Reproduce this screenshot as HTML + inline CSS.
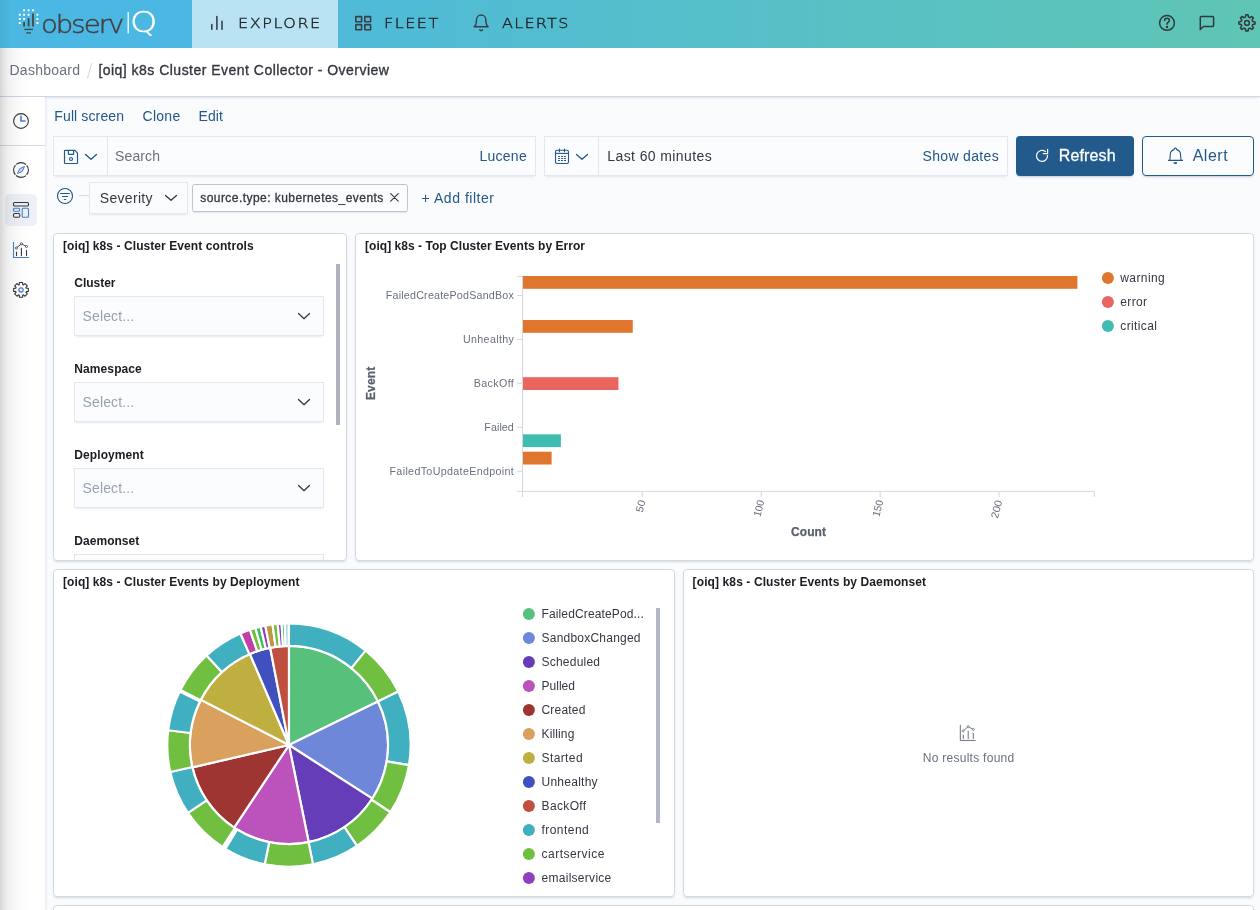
<!DOCTYPE html>
<html lang="en">
<head>
<meta charset="utf-8">
<title>[oiq] k8s Cluster Event Collector - Overview</title>
<style>
*{box-sizing:border-box;margin:0;padding:0}
html,body{width:1260px;height:910px;overflow:hidden;background:#fafbfd;font-family:"Liberation Sans",sans-serif;color:#343741;font-size:14px}
#root{position:absolute;left:0;top:0;width:1260px;height:910px;overflow:hidden;will-change:transform}
.a{position:absolute}
.t{position:absolute;white-space:nowrap;line-height:1}
#hdr{left:0;top:0;width:1260px;height:48px;background:linear-gradient(90deg,#49b7e5 0%,#5fc5b4 100%)}
#logo{left:0;top:0;width:192px;height:48px;background:#4ab8e3}
#tabx{left:192px;top:0;width:146px;height:48px;background:#b9e3f3}
#crumb{left:0;top:48px;width:1260px;height:49px;background:#fff;border-bottom:1px solid #d3dae6;box-shadow:0 2px 2px -1px rgba(152,162,179,.3)}
#side{left:0;top:97px;width:45px;height:813px;background:#fff;box-shadow:1px 0 2px rgba(120,135,165,.17)}
.panel{position:absolute;background:#fff;border:1px solid #d3dae6;border-radius:4px;box-shadow:0 2px 2px -1px rgba(152,162,179,.3),0 1px 5px -2px rgba(152,162,179,.3);overflow:hidden}
.fbox{position:absolute;background:#fbfcfd;border:1px solid #e3e8f0;box-shadow:0 1px 1px -1px rgba(152,162,179,.2),0 3px 2px -2px rgba(152,162,179,.2)}
.sel{position:absolute;left:74px;width:250px;height:39.5px;background:#fbfcfd;border:1px solid #e3e8f0;box-shadow:0 1px 1px -1px rgba(152,162,179,.2),0 3px 2px -2px rgba(152,162,179,.2)}
svg{position:absolute;overflow:visible}
#edge{left:0;top:48px;width:32px;height:862px;background:linear-gradient(90deg,rgba(0,0,0,.16) 0,rgba(0,0,0,.09) 5px,rgba(0,0,0,.047) 10px,rgba(0,0,0,.016) 20px,rgba(0,0,0,0) 30px);pointer-events:none}
#edge2{left:0;top:0;width:12px;height:48px;background:linear-gradient(90deg,rgba(0,0,0,.05) 0,rgba(0,0,0,0) 11px)}
</style>
</head>
<body><div id="root">
<div class="a" id="hdr"></div><div class="a" id="logo"></div><div class="a" id="tabx"></div>
<svg style="left:0;top:0" width="192" height="48" viewBox="0 0 192 48"><rect x="23.1" y="9.3" width="2" height="2" rx="0.4" fill="#fff"/><rect x="27.6" y="9.3" width="2" height="2" rx="0.4" fill="#fff"/><rect x="32.0" y="9.3" width="2" height="2" rx="0.4" fill="#fff"/><rect x="18.8" y="13.7" width="2" height="2" rx="0.4" fill="#fff"/><rect x="23.1" y="13.7" width="2" height="2" rx="0.4" fill="#fff"/><rect x="27.6" y="13.7" width="2" height="2" rx="0.4" fill="#fff"/><rect x="36.4" y="13.7" width="2" height="2" rx="0.4" fill="#fff"/><rect x="18.8" y="17.9" width="2" height="2" rx="0.4" fill="#fff"/><rect x="23.1" y="17.9" width="2" height="2" rx="0.4" fill="#fff"/><rect x="36.4" y="17.9" width="2" height="2" rx="0.4" fill="#fff"/><rect x="18.8" y="21.9" width="2" height="2" rx="0.4" fill="#fff"/><rect x="36.4" y="21.9" width="2" height="2" rx="0.4" fill="#fff"/><g stroke="#4a4545" stroke-width="1.8" fill="none"><path d="M24.1 22.1V26.5M28.6 18.3V26.5M33 13.5V26.5"/><path d="M24.3 29.4H33.1" stroke-width="1.3"/><path d="M26.2 32.9H31" stroke-width="1.3"/></g><path d="M128.2 11.9V33.6" stroke="#fff" stroke-width="1.3"/></svg>
<svg style="left:0;top:0" width="600" height="48" viewBox="0 0 600 48"><g fill="none" stroke="#3a3f47" stroke-width="1.6" stroke-linecap="round" stroke-linejoin="round"><path d="M211.8 24.5V29.3M216.9 16.6V29.3M222 21.3V29.3"/><rect x="355.8" y="16.6" width="5.8" height="5.2" rx="0.3"/><rect x="364.8" y="16.6" width="5.8" height="5.2" rx="0.3"/><rect x="355.8" y="24.6" width="5.8" height="5.2" rx="0.3"/><rect x="364.8" y="24.6" width="5.8" height="5.2" rx="0.3"/><g transform="translate(471.8,13.5) scale(0.78)" stroke-width="1.85"><path d="M18 8A6 6 0 0 0 6 8c0 7-3 9-3 9h18s-3-2-3-9"/><path d="M13.73 21a2 2 0 0 1-3.46 0"/></g></g></svg>
<svg style="left:1150px;top:0" width="110" height="48" viewBox="1150 0 110 48"><g fill="none" stroke="#33383c" stroke-width="1.5" stroke-linecap="round" stroke-linejoin="round"><circle cx="1167" cy="22.9" r="7.4"/><path d="M1164.6 20.6C1164.6 19.2 1165.6 18.3 1167 18.3C1168.4 18.3 1169.4 19.2 1169.4 20.4C1169.4 22.2 1167 22.2 1167 24.2"/><circle cx="1167" cy="27" r="0.5" fill="#33383c"/><path d="M1200.3 29.6V17.4C1200.3 16.8 1200.7 16.4 1201.3 16.4H1212.6C1213.2 16.4 1213.6 16.8 1213.6 17.4V25.4C1213.6 26 1213.2 26.4 1212.6 26.4H1203.4Z"/><path d="M1245.40 17.15 L1245.88 14.82 L1248.02 14.82 L1248.50 17.15 L1249.95 17.75 L1251.94 16.44 L1253.46 17.96 L1252.15 19.95 L1252.75 21.40 L1255.08 21.88 L1255.08 24.02 L1252.75 24.50 L1252.15 25.95 L1253.46 27.94 L1251.94 29.46 L1249.95 28.15 L1248.50 28.75 L1248.02 31.08 L1245.88 31.08 L1245.40 28.75 L1243.95 28.15 L1241.96 29.46 L1240.44 27.94 L1241.75 25.95 L1241.15 24.50 L1238.82 24.02 L1238.82 21.88 L1241.15 21.40 L1241.75 19.95 L1240.44 17.96 L1241.96 16.44 L1243.95 17.75Z" fill="none" stroke="#33383c" stroke-width="1.5" stroke-linejoin="round"/><circle cx="1246.95" cy="22.95" r="2.4"/></g></svg>
<div class="a" id="crumb"></div>
<svg style="left:84px;top:60px" width="12" height="22" viewBox="84 60 12 22"><path d="M87.4 78.7L91.7 63.1" stroke="#d3dae6" stroke-width="1.1"/></svg>
<div class="a" id="side"></div>
<div class="a" style="left:0;top:145px;width:45px;height:1px;background:#d3dae6"></div>
<div class="a" style="left:5px;top:194px;width:32px;height:32px;border-radius:5px;background:#edf0f6"></div>
<svg style="left:0;top:97px" width="46" height="220" viewBox="0 97 46 220"><circle cx="21" cy="121" r="7.4" fill="none" stroke="#343741" stroke-width="1.1"/><path d="M21 115.6V121H25.6" fill="none" stroke="#4a7fcc" stroke-width="1.6"/><circle cx="21" cy="170" r="7.4" fill="none" stroke="#343741" stroke-width="1.1" stroke-dasharray="10.6 1" stroke-dashoffset="5.3"/><path d="M24.5 166.5L22.3 171.3L17.5 173.5L19.7 168.7Z" fill="#c7d8f0" stroke="#4a7fcc" stroke-width="1" stroke-linejoin="round"/><rect x="13.5" y="202.5" width="15" height="3.5" rx="1.1" fill="none" stroke="#343741" stroke-width="1.1"/><rect x="13.5" y="213.5" width="6.3" height="3.7" rx="1.1" fill="none" stroke="#343741" stroke-width="1.1"/><rect x="13.5" y="208.3" width="6.1" height="3" rx="1" fill="none" stroke="#4a7fcc" stroke-width="1.1"/><rect x="22.2" y="208.3" width="6.3" height="8.9" rx="1" fill="none" stroke="#4a7fcc" stroke-width="1.1"/><path d="M13.5 242.0V257.5H28.9" fill="none" stroke="#4a7fcc" stroke-width="1.1" stroke-linejoin="round"/><path d="M16.5 252.0V255.6M21.4 248.3V255.6M26.5 250.5V255.6" stroke="#343741" stroke-width="1.1" stroke-linecap="round"/><path d="M16.4 248.0L21.4 243.8L26.5 246.5" fill="none" stroke="#343741" stroke-width="0.9"/><circle cx="16.4" cy="248.0" r="1.05" fill="#fff" stroke="#343741" stroke-width="0.8"/><circle cx="21.4" cy="243.8" r="1.05" fill="#fff" stroke="#343741" stroke-width="0.8"/><circle cx="26.5" cy="246.5" r="1.05" fill="#fff" stroke="#343741" stroke-width="0.8"/><path d="M19.28 284.68 L19.33 282.59 L22.67 282.59 L22.72 284.68 L23.48 284.99 L24.99 283.55 L27.35 285.91 L25.91 287.42 L26.22 288.18 L28.31 288.23 L28.31 291.57 L26.22 291.62 L25.91 292.38 L27.35 293.89 L24.99 296.25 L23.48 294.81 L22.72 295.12 L22.67 297.21 L19.33 297.21 L19.28 295.12 L18.52 294.81 L17.01 296.25 L14.65 293.89 L16.09 292.38 L15.78 291.62 L13.69 291.57 L13.69 288.23 L15.78 288.18 L16.09 287.42 L14.65 285.91 L17.01 283.55 L18.52 284.99Z" fill="none" stroke="#2b2f3a" stroke-width="1.05" stroke-linejoin="round"/><circle cx="21" cy="289.9" r="2.1" fill="none" stroke="#4a7fcc" stroke-width="1.3"/></svg>
<div class="fbox" style="left:53px;top:136px;width:483px;height:40px"></div>
<div class="a" style="left:107px;top:137px;width:1px;height:38px;background:#e3e8f0"></div>
<div class="fbox" style="left:544px;top:136px;width:464px;height:40px"></div>
<div class="a" style="left:598px;top:137px;width:1px;height:38px;background:#e3e8f0"></div>
<svg style="left:60px;top:145px" width="24" height="24" viewBox="60 145 24 24"><g fill="none" stroke="#22588a" stroke-width="1.2" stroke-linejoin="round"><path d="M65.3 150.3H74.9L77.5 153.1V162.7Q77.5 163.5 76.7 163.5H65.3Q64.5 163.5 64.5 162.7V151.1Q64.5 150.3 65.3 150.3Z"/><path d="M68.4 150.3V153.8Q68.4 154.4 69 154.4H73Q73.6 154.4 73.6 153.8V150.3"/><circle cx="71" cy="159" r="1.5"/></g></svg>
<svg style="left:85.30px;top:154.00px" width="12" height="6" viewBox="0 0 12 6"><path d="M0.5 0.5 L6.0 5.3 L11.5 0.5" fill="none" stroke="#22588a" stroke-width="1.3" stroke-linecap="round" stroke-linejoin="round"/></svg>
<svg style="left:552px;top:145px" width="24" height="24" viewBox="552 145 24 24"><g fill="none" stroke="#22588a" stroke-width="1.1" stroke-linejoin="round"><rect x="555.5" y="150.3" width="13" height="13.2" rx="1.6"/><path d="M555.5 153.4H568.5"/><path d="M559.4 149.1V151.7M564.5 149.1V151.7" stroke-linecap="round"/></g><g fill="#22588a"><rect x="558.0" y="155.90" width="2" height="1" rx="0.3"/><rect x="558.0" y="157.95" width="2" height="1" rx="0.3"/><rect x="558.0" y="160.00" width="2" height="1" rx="0.3"/><rect x="561.0" y="155.90" width="2" height="1" rx="0.3"/><rect x="561.0" y="157.95" width="2" height="1" rx="0.3"/><rect x="561.0" y="160.00" width="2" height="1" rx="0.3"/><rect x="564.0" y="155.90" width="2" height="1" rx="0.3"/><rect x="564.0" y="157.95" width="2" height="1" rx="0.3"/><rect x="564.0" y="160.00" width="2" height="1" rx="0.3"/></g></svg>
<svg style="left:576.20px;top:153.50px" width="12" height="6" viewBox="0 0 12 6"><path d="M0.5 0.5 L6.0 5.3 L11.5 0.5" fill="none" stroke="#22588a" stroke-width="1.3" stroke-linecap="round" stroke-linejoin="round"/></svg>
<div class="a" style="left:1016px;top:136px;width:118px;height:40px;background:#225a8b;border-radius:4px;box-shadow:0 2px 2px -1px rgba(54,97,126,.3)"></div>
<svg style="left:1034px;top:146px" width="18" height="20" viewBox="1034 146 18 20"><path d="M1045.5 151.6A5.5 5.5 0 1 0 1047.5 155.5" fill="none" stroke="#fff" stroke-width="1.2" stroke-linecap="round"/><path d="M1043.2 153.6H1047.6V149.4" fill="none" stroke="#fff" stroke-width="1.2" stroke-linecap="round" stroke-linejoin="miter"/></svg>
<div class="a" style="left:1142px;top:136px;width:112px;height:40px;background:#fbfcfd;border:1px solid #225a8b;border-radius:4px;box-shadow:0 2px 2px -1px rgba(54,97,126,.3)"></div>
<svg style="left:1165px;top:145px" width="22" height="22" viewBox="1165 145 22 22"><g fill="none" stroke="#22588a" stroke-width="1.1" stroke-linecap="round" stroke-linejoin="round"><path d="M1169.8 160.3L1170.3 154.6A5.15 5.15 0 0 1 1174.1 149.6C1174.2 148.6 1174.7 148.1 1175.4 148.1C1176.1 148.1 1176.6 148.6 1176.7 149.6A5.15 5.15 0 0 1 1180.5 154.6L1181 160.3"/><path d="M1168.4 160.4H1182.6"/></g><path d="M1173.4 162.2H1177.4A2 1.9 0 0 1 1173.4 162.2Z" fill="#22588a"/></svg>
<svg style="left:55px;top:186px" width="40" height="22" viewBox="55 186 40 22"><circle cx="65" cy="196" r="7.5" fill="none" stroke="#22588a" stroke-width="1.1"/><path d="M60.5 193.5H69.5M62.5 196.5H67.5M64.2 199.5H65.8" stroke="#22588a" stroke-width="1.05" stroke-linecap="round"/><path d="M79 195.5H89" stroke="#d3dae6" stroke-width="1"/></svg>
<div class="fbox" style="left:89px;top:182px;width:99px;height:32px"></div>
<svg style="left:165.00px;top:194.60px" width="12" height="6" viewBox="0 0 12 6"><path d="M0.5 0.5 L6.0 5.3 L11.5 0.5" fill="none" stroke="#343741" stroke-width="1.3" stroke-linecap="round" stroke-linejoin="round"/></svg>
<div class="a" style="left:192px;top:184px;width:216px;height:28px;background:#fbfcfd;border:1px solid #bcc3d1;border-radius:2.5px;box-shadow:0 2px 2px -1px rgba(152,162,179,.25)"></div>
<svg style="left:389px;top:192px" width="11" height="11" viewBox="0 0 11 11"><path d="M1.7 1.7L9.2 9.2M9.2 1.7L1.7 9.2" stroke="#343741" stroke-width="1.1" stroke-linecap="round"/></svg>
<div class="panel" style="left:53px;top:233px;width:294px;height:328px">
<div class="sel" style="left:20.25px;top:62px"></div>
<div class="sel" style="left:20.25px;top:148px"></div>
<div class="sel" style="left:20.25px;top:234px"></div>
<div class="sel" style="left:20.25px;top:320px"></div>
<div class="a" style="left:282px;top:30.3px;width:4px;height:160.5px;background:#b0b3bd"></div>
</div>
<svg style="left:298.00px;top:313.00px" width="12" height="6.4" viewBox="0 0 12 6.4"><path d="M0.5 0.5 L6.0 5.7 L11.5 0.5" fill="none" stroke="#343741" stroke-width="1.3" stroke-linecap="round" stroke-linejoin="round"/></svg>
<svg style="left:298.00px;top:399.00px" width="12" height="6.4" viewBox="0 0 12 6.4"><path d="M0.5 0.5 L6.0 5.7 L11.5 0.5" fill="none" stroke="#343741" stroke-width="1.3" stroke-linecap="round" stroke-linejoin="round"/></svg>
<svg style="left:298.00px;top:485.00px" width="12" height="6.4" viewBox="0 0 12 6.4"><path d="M0.5 0.5 L6.0 5.7 L11.5 0.5" fill="none" stroke="#343741" stroke-width="1.3" stroke-linecap="round" stroke-linejoin="round"/></svg>
<div class="panel" style="left:355px;top:233px;width:899px;height:328px"></div>
<svg style="left:356px;top:234px" width="896" height="325" viewBox="356 234 896 325" font-family="Liberation Sans,sans-serif"><rect x="523" y="276.00" width="554.41" height="12.8" fill="#e0752d"/><rect x="523" y="320.00" width="109.74" height="12.8" fill="#e0752d"/><rect x="523" y="377.20" width="95.47" height="12.8" fill="#ea6460"/><rect x="523" y="434.30" width="37.89" height="12.8" fill="#3fbdb2"/><rect x="523" y="451.70" width="28.61" height="12.8" fill="#e0752d"/><path d="M522.5 276V497M517 276.4H522.5" stroke="#d5d7dc" stroke-width="1" fill="none"/><path d="M517 491.4H1094.3V497" stroke="#d5d7dc" stroke-width="1" fill="none"/><path d="M517 295.5H522.5" stroke="#d5d7dc" stroke-width="1"/><path d="M517 339.4H522.5" stroke="#d5d7dc" stroke-width="1"/><path d="M517 383.3H522.5" stroke="#d5d7dc" stroke-width="1"/><path d="M517 427.3H522.5" stroke="#d5d7dc" stroke-width="1"/><path d="M517 471.2H522.5" stroke="#d5d7dc" stroke-width="1"/><path d="M642.26 491.4V497" stroke="#d5d7dc" stroke-width="1"/><text transform="translate(645.56,501.2) rotate(-75)" text-anchor="end" font-size="10.5" fill="#69707d" textLength="12.2" lengthAdjust="spacingAndGlyphs">50</text><path d="M761.22 491.4V497" stroke="#d5d7dc" stroke-width="1"/><text transform="translate(764.52,501.2) rotate(-75)" text-anchor="end" font-size="10.5" fill="#69707d" textLength="16.6" lengthAdjust="spacingAndGlyphs">100</text><path d="M880.17 491.4V497" stroke="#d5d7dc" stroke-width="1"/><text transform="translate(883.47,501.2) rotate(-75)" text-anchor="end" font-size="10.5" fill="#69707d" textLength="16.6" lengthAdjust="spacingAndGlyphs">150</text><path d="M999.13 491.4V497" stroke="#d5d7dc" stroke-width="1"/><text transform="translate(1002.43,501.2) rotate(-75)" text-anchor="end" font-size="10.5" fill="#69707d" textLength="18.5" lengthAdjust="spacingAndGlyphs">200</text><text transform="translate(374.6,383.4) rotate(-90)" text-anchor="middle" font-size="12" font-weight="700" fill="#5a606c" stroke="#5a606c" stroke-width="0.25" textLength="33.4" lengthAdjust="spacing">Event</text><circle cx="1107.9" cy="277.9" r="6" fill="#e0752d"/><circle cx="1107.9" cy="301.9" r="6" fill="#ea6460"/><circle cx="1107.9" cy="325.9" r="6" fill="#3fbdb2"/></svg>
<div class="panel" style="left:53px;top:569px;width:622px;height:328px"></div>
<div class="a" style="left:656px;top:608px;width:4px;height:215px;background:#b4b8c2"></div>
<svg style="left:160px;top:615px" width="260" height="260" viewBox="160 615 260 260"><g stroke="#fff" stroke-width="2.2" stroke-linejoin="round"><path d="M288.95 745.05L288.95 645.95A99.1 99.1 0 0 1 377.94 701.45Z" fill="#57c17b"/><path d="M288.95 745.05L377.94 701.45A99.1 99.1 0 0 1 372.34 798.59Z" fill="#6f87d8"/><path d="M288.95 745.05L372.34 798.59A99.1 99.1 0 0 1 308.71 842.16Z" fill="#663db8"/><path d="M288.95 745.05L308.71 842.16A99.1 99.1 0 0 1 234.11 827.59Z" fill="#bc52bc"/><path d="M288.95 745.05L234.11 827.59A99.1 99.1 0 0 1 192.39 767.34Z" fill="#9e3533"/><path d="M288.95 745.05L192.39 767.34A99.1 99.1 0 0 1 200.81 699.75Z" fill="#daa05d"/><path d="M288.95 745.05L200.81 699.75A99.1 99.1 0 0 1 249.91 653.96Z" fill="#bfaf40"/><path d="M288.95 745.05L249.91 653.96A99.1 99.1 0 0 1 270.21 647.74Z" fill="#4050bf"/><path d="M288.95 745.05L270.21 647.74A99.1 99.1 0 0 1 288.95 645.95Z" fill="#bf5040"/><path d="M288.95 623.35A121.7 121.7 0 0 1 365.70 650.61L351.45 668.14A99.1 99.1 0 0 0 288.95 645.95Z" fill="#40afbf"/><path d="M365.70 650.61A121.7 121.7 0 0 1 398.24 691.51L377.94 701.45A99.1 99.1 0 0 0 351.45 668.14Z" fill="#70bf40"/><path d="M398.24 691.51A121.7 121.7 0 0 1 408.98 765.14L386.69 761.41A99.1 99.1 0 0 0 377.94 701.45Z" fill="#40afbf"/><path d="M408.98 765.14A121.7 121.7 0 0 1 390.43 812.22L371.59 799.75A99.1 99.1 0 0 0 386.69 761.41Z" fill="#70bf40"/><path d="M390.43 812.22A121.7 121.7 0 0 1 357.00 845.94L344.37 827.21A99.1 99.1 0 0 0 371.59 799.75Z" fill="#70bf40"/><path d="M357.00 845.94A121.7 121.7 0 0 1 313.00 864.35L308.54 842.19A99.1 99.1 0 0 0 344.37 827.21Z" fill="#40afbf"/><path d="M313.00 864.35A121.7 121.7 0 0 1 264.69 864.31L269.19 842.16A99.1 99.1 0 0 0 308.54 842.19Z" fill="#70bf40"/><path d="M264.69 864.31A121.7 121.7 0 0 1 225.36 848.82L237.17 829.55A99.1 99.1 0 0 0 269.19 842.16Z" fill="#40afbf"/><path d="M222.49 847.00A121.7 121.7 0 0 1 187.94 812.93L206.70 800.32A99.1 99.1 0 0 0 234.83 828.07Z" fill="#70bf40"/><path d="M187.94 812.93A121.7 121.7 0 0 1 170.27 772.01L192.31 767.01A99.1 99.1 0 0 0 206.70 800.32Z" fill="#40afbf"/><path d="M170.27 772.01A121.7 121.7 0 0 1 168.16 730.22L190.59 732.97A99.1 99.1 0 0 0 192.31 767.01Z" fill="#70bf40"/><path d="M168.16 730.22A121.7 121.7 0 0 1 179.66 691.51L199.96 701.45A99.1 99.1 0 0 0 190.59 732.97Z" fill="#40afbf"/><path d="M180.42 689.99A121.7 121.7 0 0 1 206.57 655.47L221.87 672.10A99.1 99.1 0 0 0 200.57 700.21Z" fill="#70bf40"/><path d="M206.57 655.47A121.7 121.7 0 0 1 240.42 633.44L249.43 654.17A99.1 99.1 0 0 0 221.87 672.10Z" fill="#40afbf"/><path d="M240.42 633.44A121.7 121.7 0 0 1 249.93 629.77L257.18 651.18A99.1 99.1 0 0 0 249.43 654.17Z" fill="#bf40a8"/><path d="M249.93 629.77A121.7 121.7 0 0 1 255.40 628.06L261.63 649.79A99.1 99.1 0 0 0 257.18 651.18Z" fill="#70bf40"/><path d="M255.40 628.06A121.7 121.7 0 0 1 260.64 626.69L265.90 648.67A99.1 99.1 0 0 0 261.63 649.79Z" fill="#40bf58"/><path d="M260.64 626.69A121.7 121.7 0 0 1 265.31 625.67L269.70 647.84A99.1 99.1 0 0 0 265.90 648.67Z" fill="#8f40bf"/><path d="M265.31 625.67A121.7 121.7 0 0 1 272.54 624.46L275.59 646.86A99.1 99.1 0 0 0 269.70 647.84Z" fill="#bf9740"/><path d="M272.54 624.46A121.7 121.7 0 0 1 277.71 623.87L279.80 646.37A99.1 99.1 0 0 0 275.59 646.86Z" fill="#70bf40"/><path d="M277.71 623.87A121.7 121.7 0 0 1 281.63 623.57L282.99 646.13A99.1 99.1 0 0 0 279.80 646.37Z" fill="#8f40bf"/><path d="M281.63 623.57A121.7 121.7 0 0 1 284.81 623.42L285.58 646.01A99.1 99.1 0 0 0 282.99 646.13Z" fill="#40bf58"/><path d="M284.81 623.42A121.7 121.7 0 0 1 288.63 623.35L288.69 645.95A99.1 99.1 0 0 0 285.58 646.01Z" fill="#9fd7df"/></g></svg>
<svg style="left:520px;top:600px" width="20" height="290" viewBox="520 600 20 290"><circle cx="528.9" cy="613.9" r="6" fill="#57c17b"/><circle cx="528.9" cy="637.9" r="6" fill="#6f87d8"/><circle cx="528.9" cy="661.9" r="6" fill="#663db8"/><circle cx="528.9" cy="685.9" r="6" fill="#bc52bc"/><circle cx="528.9" cy="709.9" r="6" fill="#9e3533"/><circle cx="528.9" cy="733.9" r="6" fill="#daa05d"/><circle cx="528.9" cy="757.9" r="6" fill="#bfaf40"/><circle cx="528.9" cy="781.9" r="6" fill="#4050bf"/><circle cx="528.9" cy="805.9" r="6" fill="#bf5040"/><circle cx="528.9" cy="829.9" r="6" fill="#40afbf"/><circle cx="528.9" cy="853.9" r="6" fill="#70bf40"/><circle cx="528.9" cy="877.9" r="6" fill="#8f40bf"/></svg>
<div class="panel" style="left:683px;top:569px;width:571px;height:328px"></div>
<svg style="left:958px;top:723px" width="20" height="20" viewBox="958 723 20 20"><path d="M960.3 724.9V740.4H975.7" fill="none" stroke="#69707d" stroke-width="1.0" stroke-linejoin="round"/><path d="M963.3 734.9V738.5M968.2 731.2V738.5M973.3 733.4V738.5" stroke="#69707d" stroke-width="1.0" stroke-linecap="round"/><path d="M963.2 730.9L968.2 726.7L973.3 729.4" fill="none" stroke="#69707d" stroke-width="0.9"/><circle cx="963.2" cy="730.9" r="1.05" fill="#fff" stroke="#69707d" stroke-width="0.8"/><circle cx="968.2" cy="726.7" r="1.05" fill="#fff" stroke="#69707d" stroke-width="0.8"/><circle cx="973.3" cy="729.4" r="1.05" fill="#fff" stroke="#69707d" stroke-width="0.8"/></svg>
<div class="panel" style="left:53px;top:905px;width:1201px;height:100px"></div>
<div class="t" id="t0" style="top:12.14px;font-size:25px;color:#453f3f;left:41.00px;font-weight:200;letter-spacing:-1.786px;font-family:'DejaVu Sans','Liberation Sans',sans-serif;-webkit-text-stroke:0.5px #453f3f;transform:scaleX(1.1);transform-origin:0 50%;">observ</div>
<div class="t" id="t1" style="top:9.10px;font-size:28px;color:#fff;left:130.40px;font-weight:200;font-family:'DejaVu Sans','Liberation Sans',sans-serif;transform:scaleX(1.24);transform-origin:0 50%;-webkit-text-stroke:0.35px #fff;">Q</div>
<div class="t" id="t2" style="top:16.15px;font-size:14px;color:#1f2226;left:237.50px;font-weight:200;letter-spacing:1.387px;font-family:'DejaVu Sans','Liberation Sans',sans-serif;-webkit-text-stroke:0.4px #1f2226;transform:scaleX(1.14);transform-origin:0 50%;">EXPLORE</div>
<div class="t" id="t3" style="top:16.15px;font-size:14px;color:#1f2226;left:383.50px;font-weight:200;letter-spacing:1.359px;font-family:'DejaVu Sans','Liberation Sans',sans-serif;-webkit-text-stroke:0.4px #1f2226;transform:scaleX(1.14);transform-origin:0 50%;">FLEET</div>
<div class="t" id="t4" style="top:16.15px;font-size:14px;color:#1f2226;left:502.20px;font-weight:200;letter-spacing:1.157px;font-family:'DejaVu Sans','Liberation Sans',sans-serif;-webkit-text-stroke:0.4px #1f2226;transform:scaleX(1.14);transform-origin:0 50%;">ALERTS</div>
<div class="t" id="t5" style="top:63.45px;font-size:14px;color:#69707d;left:9.50px;letter-spacing:0.250px;">Dashboard</div>
<div class="t" id="t6" style="top:63.45px;font-size:14px;color:#343741;left:98.40px;letter-spacing:0.477px;-webkit-text-stroke:0.35px #343741;">[oiq] k8s Cluster Event Collector - Overview</div>
<div class="t" id="t7" style="top:108.95px;font-size:14px;color:#22588a;left:54.30px;letter-spacing:0.123px;">Full screen</div>
<div class="t" id="t8" style="top:108.95px;font-size:14px;color:#22588a;left:142.60px;letter-spacing:0.252px;">Clone</div>
<div class="t" id="t9" style="top:108.95px;font-size:14px;color:#22588a;left:198.40px;letter-spacing:0.158px;">Edit</div>
<div class="t" id="t10" style="top:149.25px;font-size:14px;color:#69707d;left:115.00px;letter-spacing:0.128px;">Search</div>
<div class="t" id="t11" style="top:149.25px;font-size:14px;color:#22588a;left:479.40px;letter-spacing:0.272px;">Lucene</div>
<div class="t" id="t12" style="top:149.25px;font-size:14px;color:#343741;left:607.30px;letter-spacing:0.397px;">Last 60 minutes</div>
<div class="t" id="t13" style="top:149.25px;font-size:14px;color:#22588a;left:922.50px;letter-spacing:0.336px;">Show dates</div>
<div class="t" id="t14" style="top:148.16px;font-size:16px;color:#fff;left:1058.70px;letter-spacing:0.145px;-webkit-text-stroke:0.3px #fff;">Refresh</div>
<div class="t" id="t15" style="top:148.16px;font-size:16px;color:#22588a;left:1192.70px;letter-spacing:0.498px;">Alert</div>
<div class="t" id="t16" style="top:191.15px;font-size:14px;color:#343741;left:99.80px;letter-spacing:0.303px;">Severity</div>
<div class="t" id="t17" style="top:192.14px;font-size:12px;color:#343741;left:200.20px;letter-spacing:0.448px;-webkit-text-stroke:0.3px #343741;">source.type: kubernetes_events</div>
<div class="t" id="t18" style="top:191.15px;font-size:14px;color:#22588a;left:421.60px;letter-spacing:0.532px;">+ Add filter</div>
<div class="t" id="t19" style="top:239.84px;font-size:12px;color:#1a1c21;left:63.00px;font-weight:700;letter-spacing:0.080px;">[oiq] k8s - Cluster Event controls</div>
<div class="t" id="t20" style="top:239.84px;font-size:12px;color:#1a1c21;left:365.00px;font-weight:700;letter-spacing:0.040px;">[oiq] k8s - Top Cluster Events by Error</div>
<div class="t" id="t21" style="top:576.14px;font-size:12px;color:#1a1c21;left:63.00px;font-weight:700;letter-spacing:0.080px;">[oiq] k8s - Cluster Events by Deployment</div>
<div class="t" id="t22" style="top:576.14px;font-size:12px;color:#1a1c21;left:692.60px;font-weight:700;letter-spacing:0.108px;">[oiq] k8s - Cluster Events by Daemonset</div>
<div class="t" id="t23" style="top:276.84px;font-size:12px;color:#1a1c21;left:74.30px;font-weight:700;letter-spacing:-0.024px;">Cluster</div>
<div class="t" id="t24" style="top:362.84px;font-size:12px;color:#1a1c21;left:74.30px;font-weight:700;letter-spacing:0.098px;">Namespace</div>
<div class="t" id="t25" style="top:448.84px;font-size:12px;color:#1a1c21;left:74.30px;font-weight:700;letter-spacing:0.090px;">Deployment</div>
<div class="t" id="t26" style="top:534.84px;font-size:12px;color:#1a1c21;left:74.30px;font-weight:700;letter-spacing:0.039px;">Daemonset</div>
<div class="t" id="t27" style="top:309.15px;font-size:14px;color:#98a2b3;left:82.50px;letter-spacing:0.138px;">Select...</div>
<div class="t" id="t28" style="top:395.15px;font-size:14px;color:#98a2b3;left:82.50px;letter-spacing:0.138px;">Select...</div>
<div class="t" id="t29" style="top:481.15px;font-size:14px;color:#98a2b3;left:82.50px;letter-spacing:0.138px;">Select...</div>
<div class="t" id="t30" style="top:290.34px;font-size:10.7px;color:#69707d;right:745.99px;letter-spacing:0.210px;">FailedCreatePodSandBox</div>
<div class="t" id="t31" style="top:334.24px;font-size:10.7px;color:#69707d;right:745.87px;letter-spacing:0.332px;">Unhealthy</div>
<div class="t" id="t32" style="top:378.14px;font-size:10.7px;color:#69707d;right:745.84px;letter-spacing:0.362px;">BackOff</div>
<div class="t" id="t33" style="top:422.14px;font-size:10.7px;color:#69707d;right:746.12px;letter-spacing:0.078px;">Failed</div>
<div class="t" id="t34" style="top:466.04px;font-size:10.7px;color:#69707d;right:745.86px;letter-spacing:0.345px;">FailedToUpdateEndpoint</div>
<div class="t" id="t35" style="top:525.94px;font-size:12px;color:#5a606c;left:791.00px;font-weight:700;letter-spacing:0.086px;-webkit-text-stroke:0.25px #5a606c;">Count</div>
<div class="t" id="t36" style="top:271.94px;font-size:12px;color:#343741;left:1120.30px;letter-spacing:0.411px;">warning</div>
<div class="t" id="t37" style="top:295.94px;font-size:12px;color:#343741;left:1120.30px;letter-spacing:0.339px;">error</div>
<div class="t" id="t38" style="top:319.94px;font-size:12px;color:#343741;left:1120.30px;letter-spacing:0.383px;">critical</div>
<div class="t" id="t39" style="top:607.94px;font-size:12px;color:#343741;left:541.50px;letter-spacing:0.132px;">FailedCreatePod...</div>
<div class="t" id="t40" style="top:631.94px;font-size:12px;color:#343741;left:541.50px;letter-spacing:0.224px;">SandboxChanged</div>
<div class="t" id="t41" style="top:655.94px;font-size:12px;color:#343741;left:541.50px;letter-spacing:0.223px;">Scheduled</div>
<div class="t" id="t42" style="top:679.94px;font-size:12px;color:#343741;left:541.50px;letter-spacing:0.028px;">Pulled</div>
<div class="t" id="t43" style="top:703.94px;font-size:12px;color:#343741;left:541.50px;letter-spacing:0.199px;">Created</div>
<div class="t" id="t44" style="top:727.94px;font-size:12px;color:#343741;left:541.50px;letter-spacing:0.131px;">Killing</div>
<div class="t" id="t45" style="top:751.94px;font-size:12px;color:#343741;left:541.50px;letter-spacing:0.399px;">Started</div>
<div class="t" id="t46" style="top:775.94px;font-size:12px;color:#343741;left:541.50px;letter-spacing:0.257px;">Unhealthy</div>
<div class="t" id="t47" style="top:799.94px;font-size:12px;color:#343741;left:541.50px;letter-spacing:0.372px;">BackOff</div>
<div class="t" id="t48" style="top:823.94px;font-size:12px;color:#343741;left:541.50px;letter-spacing:0.450px;">frontend</div>
<div class="t" id="t49" style="top:847.94px;font-size:12px;color:#343741;left:541.50px;letter-spacing:0.488px;">cartservice</div>
<div class="t" id="t50" style="top:871.94px;font-size:12px;color:#343741;left:541.50px;letter-spacing:0.283px;">emailservice</div>
<div class="t" id="t51" style="top:751.64px;font-size:12px;color:#69707d;left:922.80px;letter-spacing:0.267px;">No results found</div>
<div class="a" id="edge"></div><div class="a" id="edge2"></div>
</div></body>
</html>
